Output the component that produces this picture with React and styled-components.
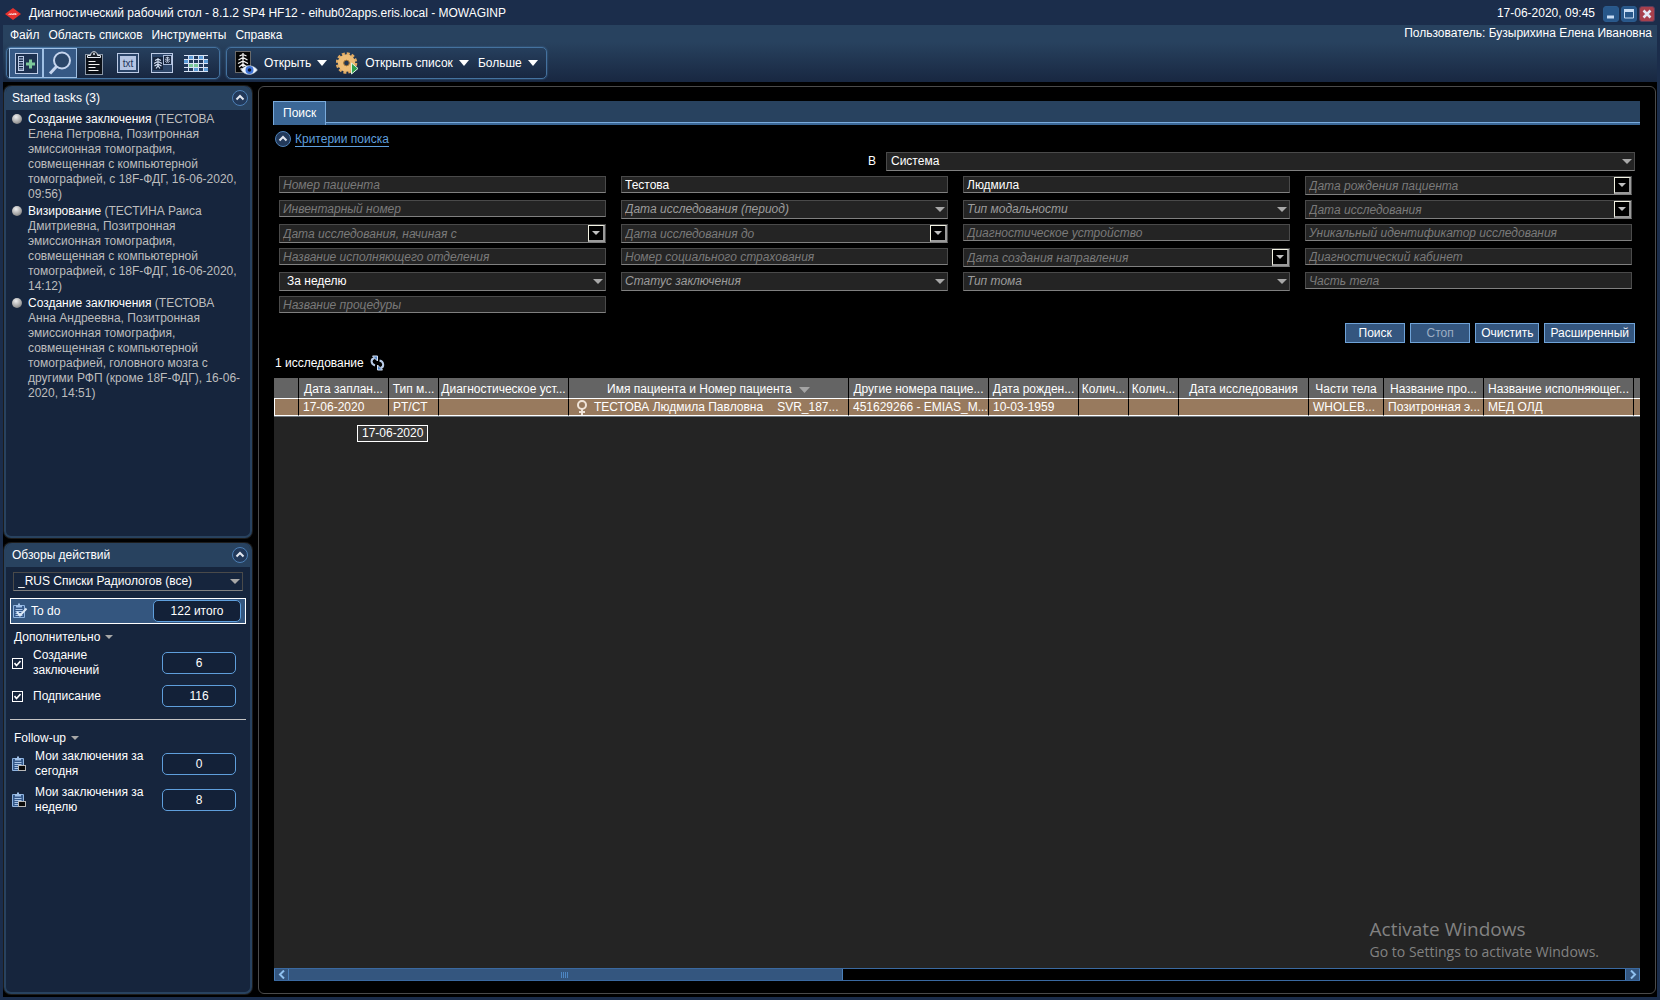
import React from "react";
import styled, { createGlobalStyle, css } from "styled-components";

const c = {
  frame: "#1b2d4b",
  bar: "#28425f",
  body: "#16253d",
  line: "#5f9fdc",
  btn: "#34567f",
  field: "#242424",
};

const Global = createGlobalStyle`
  * { box-sizing: border-box; }
  body {
    margin: 0;
    background: #000;
    color: #fff;
    font: 12px/15px "Liberation Sans", Arial, sans-serif;
  }
  button, input, select { font: inherit; color: inherit; margin: 0; padding: 0; border-radius: 0; }
  button { cursor: pointer; }
  svg { display: block; flex: none; }
`;

const Window = styled.div`
  display: flex;
  flex-direction: column;
  min-height: 100vh;
  border: solid ${c.frame};
  border-width: 0 3px 3px;
  background: #000;
`;

const TitleBar = styled.header`
  display: flex;
  align-items: center;
  gap: 8px;
  height: 25px;
  padding: 2px 2px 0;
  background: ${c.frame};
`;
const Title = styled.h1`
  flex: 1;
  margin: 0;
  font-size: 12px;
  font-weight: 400;
`;
const WindowButtons = styled.div`
  display: flex;
  gap: 2px;
`;
const WindowButton = styled.button`
  display: grid;
  place-items: center;
  width: 16px;
  height: 16px;
  border: 1px solid ${(p) => (p.$close ? "#5a3c5c" : "#2b5a8c")};
  border-radius: 3px;
  background: ${(p) => (p.$close ? "#a8404c" : "#28578a")};
`;

const Top = styled.div`
  padding: 0 2px 3px 3px;
  height: 57px;
  background: linear-gradient(${c.bar} 30%, #182741);
`;
const MenuRow = styled.div`
  display: flex;
  justify-content: space-between;
  height: 22px;
  padding: 1px 3px 0 4px;
`;
const Menu = styled.nav`
  display: flex;
  gap: 9px;
`;
const MenuItem = styled.button`
  display: block;
  height: 18px;
  border: 0;
  background: none;
`;
const Toolbars = styled.div`
  display: flex;
  gap: 6px;
`;
const ToolGroup = styled.div`
  display: flex;
  align-items: center;
  height: 32px;
  padding: 0 ${(p) => (p.$text ? "8px" : "2px")};
  border: 1px solid #44729f;
  border-radius: 5px;
  background: linear-gradient(#263f5d, #182741);
  box-shadow: 0 0 2px #44729f;
  ${(p) => !p.$text && css`padding-right: 6px;`}
`;
const ToolButton = styled.button`
  display: grid;
  place-items: center;
  width: 34px;
  height: 30px;
  border: 1px solid ${(p) => (p.$on ? "#9fc0e4" : "transparent")};
  background: ${(p) => (p.$on ? "#365985" : "none")};
`;
const ToolMenu = styled.button`
  display: flex;
  align-items: center;
  gap: 6px;
  margin-right: 9px;
  border: 0;
  background: none;
  &:last-child { margin-right: 0; }
`;

const Content = styled.div`
  flex: 1;
  display: grid;
  grid-template-columns: 248px minmax(0, 1fr);
  gap: 6px;
  padding: 4px 1px 3px;
`;
const Sidebar = styled.aside`
  display: flex;
  flex-direction: column;
  gap: 5px;
`;
const Panel = styled.section`
  flex: ${(p) => p.$grow} 0 0;
  border: 1px solid ${c.bar};
  border-width: 0 2px 2px;
  border-radius: 7px;
  background: ${c.body};
  box-shadow: 0 0 0 1px #1c1c1c;
`;
const PanelHead = styled.header`
  display: flex;
  align-items: center;
  justify-content: space-between;
  height: 24px;
  padding: 0 2px 0 6px;
  border-radius: 6px 6px 0 0;
  background: ${c.bar};
`;
const PanelTitle = styled.h2`
  margin: 0;
  font-size: 12px;
  font-weight: 400;
`;
const RoundButton = styled.button`
  display: grid;
  place-items: center;
  width: 16px;
  height: 16px;
  border: 1px solid #4d80b6;
  border-radius: 50%;
  background: #22395a;
`;

const TaskList = styled.ul`
  display: grid;
  gap: 2px;
  margin: 0;
  padding: 2px 8px 0 6px;
  list-style: none;
`;
const Task = styled.li`
  display: flex;
  gap: 6px;
  color: #bdbdbd;
`;
const TaskName = styled.span`
  color: #fff;
`;
const TaskText = styled.div`
  flex: 1;
`;
const Dot = styled.span`
  flex: none;
  width: 10px;
  height: 10px;
  margin-top: 2px;
  border-radius: 50%;
  background: radial-gradient(circle at 40% 30%, #f0f0f0, #a0a0a0 60%, #5c5c5c);
`;

const Views = styled.div`
  padding: 5px 4px;
`;
const ViewPick = styled.div`
  margin: 0 3px 7px;
`;
const TodoRow = styled.button`
  display: flex;
  align-items: center;
  gap: 3px;
  width: 100%;
  height: 26px;
  padding: 0 4px 0 1px;
  border: 1px solid #fff;
  background: #34567f;
  text-align: left;
`;
const RowLabel = styled.span`
  flex: 1;
`;
const Badge = styled.span`
  flex: none;
  width: ${(p) => (p.$wide ? "88px" : "74px")};
  height: 22px;
  border: 1px solid ${c.line};
  border-radius: 5px;
  background: #132138;
  line-height: 20px;
  text-align: center;
`;
const GroupToggle = styled.button`
  display: flex;
  align-items: center;
  gap: 5px;
  height: 16px;
  margin: 5px 0 0 4px;
  border: 0;
  background: none;
`;
const ViewRow = styled.label`
  display: flex;
  align-items: center;
  gap: ${(p) => (p.$icon ? "8px" : "10px")};
  height: ${(p) => (p.$tall ? "36px" : "30px")};
  padding: 0 10px 0 ${(p) => (p.$icon ? "1px" : "2px")};
`;
const ViewText = styled.span`
  flex: 1;
  padding-right: ${(p) => (p.$tight ? "10px" : "0")};
`;
const Tick = styled.input`
  appearance: none;
  flex: none;
  width: 11px;
  height: 11px;
  border: 1px solid #fff;
  background: ${c.body};
`;
const TickBox = styled.span`
  position: relative;
  display: flex;
  svg { position: absolute; inset: 2px; pointer-events: none; }
`;
const Divider = styled.hr`
  height: 1px;
  margin: 8px 0 10px;
  border: 0;
  background: #c4c4c4;
`;

const Main = styled.main`
  display: flex;
  flex-direction: column;
  padding: 14px 15px 12px 14px;
  border: 1px solid #4a4a4a;
  border-radius: 6px;
  background: #000;
`;
const Tabs = styled.div`
  display: flex;
  height: 24px;
  background: linear-gradient(${c.bar} 21px, #79aadb 21px 22px, #3b6796 22px);
`;
const Tab = styled.button`
  height: 24px;
  padding: 0 9px;
  border: 1px solid #79aadb;
  border-bottom: 0;
  background: #3b6796;
`;
const Form = styled.form`
  padding: 0 5px 0 6px;
`;
const Criteria = styled.div`
  display: flex;
  align-items: center;
  gap: 4px;
  height: 28px;
  margin: 0 0 -1px -4px;
`;
const CriteriaLink = styled.a`
  border-bottom: 1px solid #5f9fdc;
  color: #5f9fdc;
  line-height: 14px;
  text-decoration: none;
`;
const ScopeRow = styled.div`
  display: grid;
  grid-template-columns: 607px minmax(0, 1fr);
  align-items: center;
  margin-bottom: 5px;
`;
const ScopeLabel = styled.label`
  padding-right: 10px;
  text-align: right;
`;
const Fields = styled.div`
  display: grid;
  grid-template-columns: repeat(4, minmax(0, 1fr));
  grid-auto-rows: 24px;
  column-gap: 15px;
  align-items: start;
  padding-right: 3px;
`;
const box = css`
  width: 100%;
  border: 1px solid #4a4a4a;
  border-bottom-color: #808080;
  background: ${c.field};
  outline: 0;
`;
const TextInput = styled.input`
  ${box}
  height: 17px;
  padding: 0 3px;
  &::placeholder { color: #7a7a7a; font-style: italic; opacity: 1; }
`;
const SelectWrap = styled.div`
  position: relative;
  svg { position: absolute; right: 3px; top: 7px; pointer-events: none; }
`;
const Select = styled.select`
  ${box}
  appearance: none;
  height: 19px;
  padding: 0 20px 0 ${(p) => (p.$hint ? "3px" : p.$pad || "4px")};
  ${(p) => p.$clear && css`background: transparent;`}
  ${(p) => p.$hint && css`color: #9c9c9c; font-style: italic;`}
`;
const DateWrap = styled.div`
  ${box}
  display: flex;
  height: 19px;
`;
const DateInput = styled.input`
  flex: 1;
  min-width: 0;
  padding: 1px 3px 0;
  border: 0;
  outline: 0;
  background: none;
  &::placeholder { color: #7a7a7a; font-style: italic; opacity: 1; }
`;
const DateButton = styled.button`
  display: grid;
  place-items: center;
  width: 17px;
  border: 1px solid #f4f4e4;
  border-right: 2px solid #9a9a9a;
  border-bottom: 2px solid #9a9a9a;
  background: #000;
`;
const Actions = styled.div`
  display: flex;
  justify-content: flex-end;
  gap: 5px;
  margin-top: 3px;
`;
const Action = styled.button`
  min-width: 60px;
  height: 20px;
  padding: 0 5px;
  border: 1px solid #6fa3d8;
  background: ${c.btn};
  &:disabled { color: #9caec4; }
`;

const Count = styled.div`
  display: flex;
  align-items: center;
  gap: 6px;
  height: 35px;
  padding: 5px 2px 0;
`;
const Refresh = styled.button`
  border: 0;
  background: none;
`;
const Results = styled.div`
  flex: 1;
  position: relative;
  margin-left: 1px;
  background: ${c.field};
`;
const Table = styled.table`
  width: 100%;
  border-spacing: 0;
  table-layout: fixed;
`;
const Th = styled.th`
  height: 20px;
  padding: 2px 2px 0;
  border-right: 1px solid #000;
  background: #646464;
  font-weight: 400;
  white-space: nowrap;
  overflow: hidden;
  &:last-child { border-right: 0; }
  svg { display: inline-block; margin-left: 4px; }
`;
const Td = styled.td`
  height: 18px;
  padding: 0 0 0 4px;
  border: solid #fff;
  border-width: 1px 0 1px 0;
  border-right: 1px solid #000;
  background: #987a5e;
  white-space: nowrap;
  overflow: hidden;
  box-shadow: 0 1px #707880;
  &:first-child { border-left: 1px solid #fff; }
  &:last-child { border-right: 0; }
`;
const Patient = styled.div`
  display: flex;
  align-items: center;
  gap: 6px;
  padding-left: 3px;
`;
const PatientId = styled.span`
  padding-left: 8px;
`;
const Tooltip = styled.div`
  position: absolute;
  left: 83px;
  top: 47px;
  height: 17px;
  padding: 0 4px;
  border: 1px solid #fff;
  background: #383838;
`;
const Watermark = styled.div`
  position: absolute;
  right: 41px;
  bottom: 6px;
  color: #828282;
  font: 14px/20px "Open Sans", "Noto Sans", sans-serif;
`;
const WatermarkTitle = styled.div`
  font-size: 19px;
  line-height: 26px;
`;

const ScrollBar = styled.div`
  display: flex;
  height: 13px;
  margin-left: 1px;
  border: solid #3a69a0;
  border-width: 1px 0;
`;
const ScrollButton = styled.button`
  display: grid;
  place-items: center;
  width: 15px;
  border: solid #4a7fb8;
  border-width: 0 1px;
  background: ${c.btn};
`;
const Track = styled.div`
  flex: 1;
`;
const Thumb = styled.div`
  display: grid;
  place-items: center;
  height: 100%;
  background: ${c.btn};
  border-right: 1px solid #4a7fb8;
`;

const Arrow = ({ w = 10, h = 5, fill = "#a8a8a8" }) => (
  <svg width={w} height={h} viewBox="0 0 10 5" preserveAspectRatio="none" aria-hidden="true">
    <path d="M0 0h10L5 5z" fill={fill} />
  </svg>
);
const UpIcon = () => (
  <svg width="10" height="10" viewBox="0 0 10 10" aria-hidden="true">
    <path d="M1.500 6.500 5 3l3.500 3.500" fill="none" stroke="#e4e8f0" strokeWidth="2" />
  </svg>
);

const Logo = () => (
  <svg width="16" height="14" viewBox="0 0 16 14" aria-hidden="true">
    <path d="M8 1 16 7 8 13 0 7z" fill="#e8322e" />
    <path d="M3.500 8 5 6.500l.3 1.500 1.400-1.500.3 1.500 1.400-1.500.4 1.500 1.400-2 .3 2 1.500-1.500" fill="none" stroke="#fff" strokeWidth=".7" />
  </svg>
);
const PanelAddIcon = () => (
  <svg width="23" height="21" viewBox="0 0 23 21">
    <rect x=".5" y=".5" width="22" height="20" fill="#1d3150" stroke="#bccbe6" />
    <rect x="3.500" y="3.500" width="5" height="14" fill="none" stroke="#bccbe6" />
    <path d="M4 6h4M4 8.500h4M4 11h4M4 13.500h4M4 16h4" stroke="#bccbe6" />
    <path d="M15.500 6.500v9M11 11h9" stroke="#7cc79a" strokeWidth="3" />
  </svg>
);
const SearchIcon = () => (
  <svg width="24" height="24" viewBox="0 0 24 24">
    <circle cx="14" cy="9.500" r="8" fill="#2b4669" stroke="#c6d5ee" strokeWidth="2" />
    <path d="M8.500 15.500 2 22.500" stroke="#c6d5ee" strokeWidth="3" />
  </svg>
);
const ClipIcon = () => (
  <svg width="18" height="24" viewBox="0 0 18 24">
    <rect x=".5" y="3.500" width="17" height="20" fill="#0b0f16" stroke="#8c98a8" />
    <path d="M2.500 6.500v-2h3c0-5 7-5 7 0h3v2z" fill="#1a2028" stroke="#e4eaf2" />
    <circle cx="9" cy="3" r="1" fill="#e4eaf2" />
    <path d="M3.500 10.500h7M3.500 13.500h11M3.500 16.500h7M3.500 19.500h10" stroke="#f0f0f0" />
  </svg>
);
const TxtIcon = () => (
  <svg width="22" height="20" viewBox="0 0 22 20">
    <rect x=".5" y=".5" width="21" height="19" fill="#2a4468" stroke="#bccbe6" />
    <rect x="3" y="3" width="16" height="14" fill="#b4c4e2" />
    <text x="11" y="14" textAnchor="middle" fontSize="10" fill="#1f3558">txt</text>
  </svg>
);
const Rib = ({ x, y, w, h }) => (
  <svg x={x} y={y} width={w} height={h} viewBox="0 0 9 11" preserveAspectRatio="none">
    <path
      d="M4.500 0v8M1.500 2.500 4.500 1l3 1.500M.5 5.500l4-2 4 2M1 8l3.500-2L8 8M2.500 10.500l2-2.500 2 2.500"
      fill="none"
      stroke="#d2deF2"
      strokeWidth="1.200"
    />
  </svg>
);
const CompareIcon = () => (
  <svg width="22" height="20" viewBox="0 0 22 20">
    <rect x=".5" y=".5" width="21" height="19" fill="#2c4568" stroke="#bccbe6" />
    <rect x="2" y="4" width="10" height="13" fill="#16253d" />
    <Rib x={2.5} y={5} w={9} h={11} />
    <rect x="12.500" y="2.500" width="8" height="9" fill="#16253d" stroke="#a8bad8" />
    <Rib x={13.5} y={3.5} w={6} h={7} />
  </svg>
);
const cells = [
  ["#20385a", "#5c9bd6", "#20385a", "#5c9bd6", "#20385a"],
  ["#5c9bd6", "#20385a", "#20385a", "#20385a", "#5c9bd6"],
  ["#20385a", "#7cc79a", "#7cc79a", "#20385a", "#20385a"],
  ["#20385a", "#20385a", "#5c9bd6", "#20385a", "#5c9bd6"],
];
const GridIcon = () => (
  <svg width="24" height="17" viewBox="0 0 24 17">
    <rect width="24" height="17" fill="#d8e3f4" />
    {cells.map((row, y) =>
      row.map((fill, x) => (
        <rect key={`${x}${y}`} x={x * 5} y={1 + y * 4} width="4" height="3" fill={fill} />
      ))
    )}
  </svg>
);
const XrayIcon = () => (
  <svg width="23" height="25" viewBox="0 0 23 25">
    <rect x=".5" y=".5" width="15" height="21" fill="#050505" stroke="#6a6a6a" />
    <path d="M8 2v14M4.500 5 8 3.500 11.500 5M3.500 9 8 6.500 12.500 9M3 12.500 8 10l5 2.500M4 16l4-3 4 3M5.500 18h5" fill="none" stroke="#f4f4f4" strokeWidth="1.300" />
    <path d="M6 19c4-6 12-6 16.500 0-4.500 6-12.500 6-16.500 0z" fill="#eef4fb" stroke="#8aa0b4" strokeWidth=".5" />
    <circle cx="14.500" cy="19" r="4" fill="#3f74d8" />
    <circle cx="14.500" cy="19" r="1.800" fill="#0a1630" />
  </svg>
);
const GearIcon = () => (
  <svg width="23" height="24" viewBox="0 0 23 24">
    <circle cx="10.500" cy="12" r="9.500" fill="none" stroke="#e2ab62" strokeWidth="2.500" strokeDasharray="3 1.974" />
    <circle cx="10.500" cy="12" r="5.700" fill="none" stroke="#edbc76" strokeWidth="6" />
    <circle cx="10.500" cy="12" r="2.800" fill="#1f3553" stroke="#a87838" />
    <path d="M15.500 12 22 17.500l-6.500 5.500z" fill="#2fa04c" stroke="#dff3e2" />
  </svg>
);
const NoteIcon = ({ check }) => (
  <svg width="16" height="16" viewBox="0 0 16 16">
    <path d="M1.500 2.500h11v12h-11z" fill="#35598a" stroke="#8fb4e0" />
    <path d="M4 4.500V2h2V.5h2V2h2v2.500z" fill="#9fc0e8" />
    <path d="M3.500 6.500h7M3.500 8.500h7M3.500 10.500h7M3.500 12.500h7" stroke="#a9c6ea" />
    {check ? (
      <path d="M5 9l3 3.500 6.500-7" fill="none" stroke="#dce8f6" strokeWidth="2" />
    ) : (
      <rect x="7.500" y="9.500" width="7" height="5" fill="#0a0a0a" stroke="#b8b8b8" />
    )}
  </svg>
);
const RefreshIcon = () => (
  <svg width="15" height="16" viewBox="0 0 15 16">
    <path d="M5 10.500C.5 9 .5 4 4.500 3" fill="none" stroke="#b9cce8" strokeWidth="2" />
    <path d="M2.500 1h5v5z" fill="#4f82c4" stroke="#d4e0f2" />
    <path d="M9.500 5.500c4.500 1 5 6.500 1 7.500" fill="none" stroke="#b9cce8" strokeWidth="2" />
    <path d="M12.500 15h-5v-5z" fill="#4f82c4" stroke="#d4e0f2" />
  </svg>
);
const FemaleIcon = () => (
  <svg width="12" height="15" viewBox="0 0 12 15" aria-label="Ж">
    <circle cx="6" cy="5" r="4" fill="none" stroke="#f0e4d8" strokeWidth="2" />
    <path d="M6 9v6M3 12h6" stroke="#f0e4d8" strokeWidth="2" />
  </svg>
);

const tools = [
  ["Панель задач", PanelAddIcon, true],
  ["Поиск", SearchIcon, true],
  ["Задания", ClipIcon],
  ["Текст", TxtIcon],
  ["Сравнение", CompareIcon],
  ["Таблица", GridIcon],
];

const tasks = [
  ["Создание заключения", "(ТЕСТОВА Елена Петровна, Позитронная эмиссионная томография, совмещенная с компьютерной томографией, с 18F-ФДГ, 16-06-2020, 09:56)"],
  ["Визирование", "(ТЕСТИНА Раиса Дмитриевна, Позитронная эмиссионная томография, совмещенная с компьютерной томографией, с 18F-ФДГ, 16-06-2020, 14:12)"],
  ["Создание заключения", "(ТЕСТОВА Анна Андреевна, Позитронная эмиссионная томография, совмещенная с компьютерной томографией, головного мозга с другими РФП (кроме 18F-ФДГ), 16-06-2020, 14:51)"],
];

const fields = [
  ["text", "Номер пациента"],
  ["text", "Фамилия", "Тестова"],
  ["text", "Имя", "Людмила"],
  ["date", "Дата рождения пациента"],
  ["text", "Инвентарный номер"],
  ["select", "Дата исследования (период)"],
  ["select", "Тип модальности"],
  ["date", "Дата исследования"],
  ["date", "Дата исследования, начиная с"],
  ["date", "Дата исследования до"],
  ["text", "Диагностическое устройство"],
  ["text", "Уникальный идентификатор исследования"],
  ["text", "Название исполняющего отделения"],
  ["text", "Номер социального страхования"],
  ["date", "Дата создания направления"],
  ["text", "Диагностический кабинет"],
  ["select", "Период", "За неделю"],
  ["select", "Статус заключения"],
  ["select", "Тип тома"],
  ["text", "Часть тела"],
  ["text", "Название процедуры"],
];

const columns = [
  [25, "", ""],
  [90, "Дата заплан...", "17-06-2020"],
  [50, "Тип м...", "PT/CT"],
  [130, "Диагностическое уст...", ""],
  [280, "Имя пациента и Номер пациента", "patient"],
  [140, "Другие номера пацие...", "451629266 - EMIAS_M..."],
  [90, "Дата рожден...", "10-03-1959"],
  [50, "Колич...", ""],
  [50, "Колич...", ""],
  [130, "Дата исследования", ""],
  [75, "Части тела", "WHOLEB..."],
  [100, "Название про...", "Позитронная э..."],
  [150, "Название исполняющег...", "МЕД ОЛД"],
  [null, "", ""],
];

function Field({ kind, label, value }) {
  if (kind === "select") {
    return (
      <SelectWrap>
        <Select aria-label={label} $hint={!value} $pad="7px">
          <option>{value || label}</option>
        </Select>
        <Arrow />
      </SelectWrap>
    );
  }
  if (kind === "date") {
    return (
      <DateWrap>
        <DateInput aria-label={label} placeholder={label} />
        <DateButton type="button" aria-label={`${label}: календарь`}>
          <Arrow w={8} h={4} fill="#c0c0c0" />
        </DateButton>
      </DateWrap>
    );
  }
  return <TextInput aria-label={label} placeholder={label} defaultValue={value} />;
}

function CheckRow({ label, count, tall }) {
  return (
    <ViewRow $tall={tall}>
      <TickBox>
        <Tick type="checkbox" defaultChecked />
        <svg width="7" height="7" viewBox="0 0 7 7" aria-hidden="true">
          <path d="M.5 3 2.500 5.500 6.500 1" fill="none" stroke="#fff" strokeWidth="1.600" />
        </svg>
      </TickBox>
      <ViewText $tight>{label}</ViewText>
      <Badge>{count}</Badge>
    </ViewRow>
  );
}

export default function App() {
  return (
    <>
      <Global />
      <Window>
        <TitleBar>
          <Logo />
          <Title>Диагностический рабочий стол - 8.1.2 SP4 HF12 - eihub02apps.eris.local - MOWAGINP</Title>
          <time>17-06-2020, 09:45</time>
          <WindowButtons>
            <WindowButton aria-label="Свернуть">
              <svg width="10" height="10"><path d="M1 8h7" stroke="#c8dcf4" strokeWidth="3" /></svg>
            </WindowButton>
            <WindowButton aria-label="Развернуть">
              <svg width="10" height="10"><path d="M.5 1v8h9V1" fill="none" stroke="#c8dcf4" /><path d="M0 1.500h10" stroke="#c8dcf4" strokeWidth="3" /></svg>
            </WindowButton>
            <WindowButton $close aria-label="Закрыть">
              <svg width="10" height="10"><path d="M1.500 1.500l7 7M8.500 1.500l-7 7" stroke="#e4e8f4" strokeWidth="2.500" /></svg>
            </WindowButton>
          </WindowButtons>
        </TitleBar>

        <Top>
          <MenuRow>
            <Menu>
              {["Файл", "Область списков", "Инструменты", "Справка"].map((m) => (
                <MenuItem key={m}>{m}</MenuItem>
              ))}
            </Menu>
            <span>Пользователь: Бузырихина Елена Ивановна</span>
          </MenuRow>
          <Toolbars>
            <ToolGroup>
              {tools.map(([name, Icon, on]) => (
                <ToolButton key={name} aria-label={name} $on={on}>
                  <Icon />
                </ToolButton>
              ))}
            </ToolGroup>
            <ToolGroup $text>
              <ToolMenu><XrayIcon />Открыть <Arrow fill="#fff" w={10} h={6} /></ToolMenu>
              <ToolMenu><GearIcon />Открыть список <Arrow fill="#fff" w={10} h={6} /></ToolMenu>
              <ToolMenu>Больше <Arrow fill="#fff" w={10} h={6} /></ToolMenu>
            </ToolGroup>
          </Toolbars>
        </Top>

        <Content>
          <Sidebar>
            <Panel $grow={452}>
              <PanelHead>
                <PanelTitle>Started tasks (3)</PanelTitle>
                <RoundButton aria-label="Свернуть панель"><UpIcon /></RoundButton>
              </PanelHead>
              <TaskList>
                {tasks.map(([name, text], i) => (
                  <Task key={i}>
                    <Dot />
                    <TaskText><TaskName>{name}</TaskName> {text}</TaskText>
                  </Task>
                ))}
              </TaskList>
            </Panel>

            <Panel $grow={451}>
              <PanelHead>
                <PanelTitle>Обзоры действий</PanelTitle>
                <RoundButton aria-label="Свернуть панель"><UpIcon /></RoundButton>
              </PanelHead>
              <Views>
                <ViewPick>
                  <SelectWrap>
                    <Select aria-label="Обзор" $clear>
                      <option>_RUS Списки Радиологов (все)</option>
                    </Select>
                    <Arrow />
                  </SelectWrap>
                </ViewPick>
                <TodoRow>
                  <NoteIcon check />
                  <RowLabel>To do</RowLabel>
                  <Badge $wide>122 итого</Badge>
                </TodoRow>
                <GroupToggle>Дополнительно <Arrow w={8} h={4} /></GroupToggle>
                <CheckRow tall label="Создание заключений" count="6" />
                <CheckRow label="Подписание" count="116" />
                <Divider />
                <GroupToggle>Follow-up <Arrow w={8} h={4} /></GroupToggle>
                {[["Мои заключения за сегодня", 0], ["Мои заключения за неделю", 8]].map(([label, n]) => (
                  <ViewRow as="div" key={label} $icon $tall>
                    <NoteIcon />
                    <ViewText>{label}</ViewText>
                    <Badge>{n}</Badge>
                  </ViewRow>
                ))}
              </Views>
            </Panel>
          </Sidebar>

          <Main>
            <Tabs><Tab>Поиск</Tab></Tabs>
            <Form onSubmit={(e) => e.preventDefault()}>
              <Criteria>
                <RoundButton type="button" aria-label="Свернуть критерии"><UpIcon /></RoundButton>
                <CriteriaLink href="#criteria">Критерии поиска</CriteriaLink>
              </Criteria>
              <ScopeRow id="criteria">
                <ScopeLabel htmlFor="scope">В</ScopeLabel>
                <SelectWrap>
                  <Select id="scope"><option>Система</option></Select>
                  <Arrow />
                </SelectWrap>
              </ScopeRow>
              <Fields>
                {fields.map(([kind, label, value]) => (
                  <Field key={kind + label} kind={kind} label={label} value={value} />
                ))}
              </Fields>
              <Actions>
                <Action type="submit">Поиск</Action>
                <Action type="button" disabled>Стоп</Action>
                <Action type="button">Очистить</Action>
                <Action type="button">Расширенный</Action>
              </Actions>
            </Form>
            <Count>
              1 исследование
              <Refresh aria-label="Обновить"><RefreshIcon /></Refresh>
            </Count>
            <Results>
              <Table>
                <colgroup>
                  {columns.map(([w], i) => (
                    <col key={i} width={w || undefined} />
                  ))}
                </colgroup>
                <thead>
                  <tr>
                    {columns.map(([, head, cell], i) => (
                      <Th key={i}>
                        {head}
                        {cell === "patient" && <> <Arrow w={11} h={6} fill="#a4a4a4" /></>}
                      </Th>
                    ))}
                  </tr>
                </thead>
                <tbody>
                  <tr>
                    {columns.map(([, , cell], i) => (
                      <Td key={i}>
                        {cell === "patient" ? (
                          <Patient>
                            <FemaleIcon />
                            ТЕСТОВА Людмила Павловна
                            <PatientId>SVR_187...</PatientId>
                          </Patient>
                        ) : (
                          cell
                        )}
                      </Td>
                    ))}
                  </tr>
                </tbody>
              </Table>
              <Tooltip role="tooltip">17-06-2020</Tooltip>
              <Watermark>
                <WatermarkTitle>Activate Windows</WatermarkTitle>
                Go to Settings to activate Windows.
              </Watermark>
            </Results>
            <ScrollBar>
              <ScrollButton aria-label="Влево">
                <svg width="8" height="9"><path d="M6 .5 2 4.500l4 4" fill="none" stroke="#8fc0ee" strokeWidth="2" /></svg>
              </ScrollButton>
              <Track>
                <Thumb style={{ width: `${(554 / 1336) * 100}%` }}>
                  <svg width="8" height="6"><path d="M.5 0v6M2.500 0v6M4.500 0v6M6.500 0v6" stroke="#4d86c4" /></svg>
                </Thumb>
              </Track>
              <ScrollButton aria-label="Вправо">
                <svg width="8" height="9"><path d="M2 .5l4 4-4 4" fill="none" stroke="#8fc0ee" strokeWidth="2" /></svg>
              </ScrollButton>
            </ScrollBar>
          </Main>
        </Content>
      </Window>
    </>
  );
}
